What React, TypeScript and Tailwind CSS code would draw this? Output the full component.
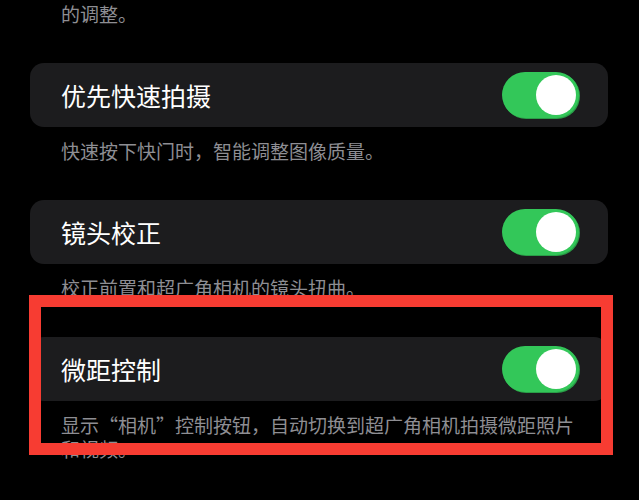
const font = { fontFamily: '"Noto Sans CJK SC", "Noto Sans", sans-serif' };

function Toggle() {
  return (
    <div className="relative w-[77px] h-[46px] rounded-full bg-[#33c759] shadow-[1px_1px_0_#2a9e48]">
      <div className="absolute right-[3px] top-[3px] w-[40px] h-[40px] rounded-full bg-white" />
    </div>
  );
}

function Row({ label }: { label: string }) {
  return (
    <div className="h-[64px] rounded-[14px] bg-[#1c1c1e] flex items-center justify-between pl-[31px] pr-[29px]">
      <span className="text-[25px] leading-none text-white">{label}</span>
      <Toggle />
    </div>
  );
}

function Caption({ children }: { children: React.ReactNode }) {
  return <p className="px-[31px] text-[19px] leading-[24px] text-[#8e8e93]">{children}</p>;
}

export default function App() {
  return (
    <div className="relative w-[639px] h-[500px] overflow-hidden bg-black" style={font}>
      <div className="px-[30px] pt-[2px] pr-[31px]">
        <Caption>的调整。</Caption>

        <div className="mt-[37px]">
          <Row label="优先快速拍摄" />
          <div className="mt-[12px]">
            <Caption>快速按下快门时，智能调整图像质量。</Caption>
          </div>
        </div>

        <div className="mt-[37px]">
          <Row label="镜头校正" />
          <div className="mt-[12px]">
            <Caption>校正前置和超广角相机的镜头扭曲。</Caption>
          </div>
        </div>

        <div className="mt-[37px]">
          <Row label="微距控制" />
          <div className="mt-[12px]">
            <Caption>
              显示“相机”控制按钮，自动切换到超广角相机拍摄微距照片
              <br />
              和视频。
            </Caption>
          </div>
        </div>
      </div>

      {/* highlight frame drawn over the screenshot */}
      <div className="absolute left-[29px] top-[295px] w-[584px] h-[160px] border-[12px] border-[#f73c32]" />
    </div>
  );
}
